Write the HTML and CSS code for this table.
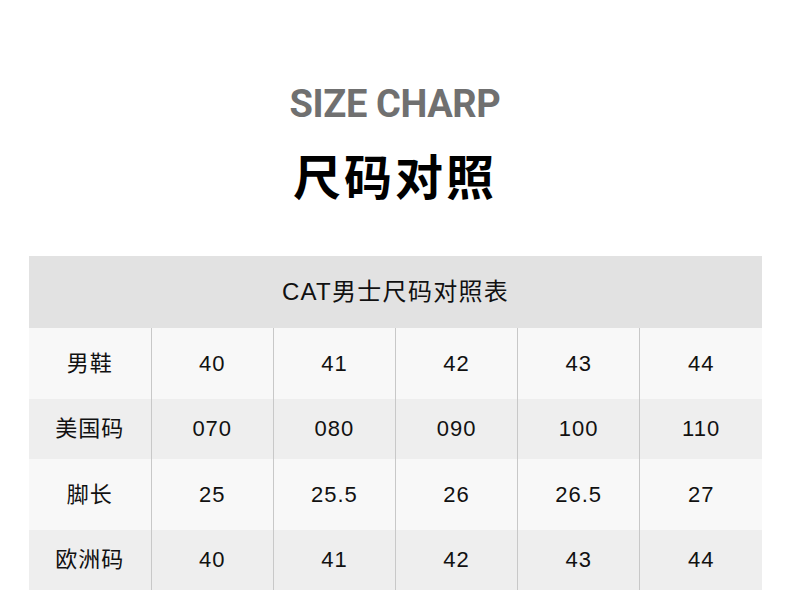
FILE: index.html
```html
<!DOCTYPE html>
<html lang="zh-CN">
<head>
<meta charset="utf-8">
<title>尺码对照</title>
<link rel="stylesheet" href="styles.css">
</head>
<body>
<div class="page">
  <header class="heading">
    <div class="en-title">SIZE CHARP</div>
    <h1 class="cn-title">尺码对照</h1>
  </header>
  <table class="size-table">
    <thead>
      <tr class="head-row"><th colspan="6">CAT男士尺码对照表</th></tr>
    </thead>
    <tbody>
      <tr class="row row-light tall"><td>男鞋</td><td>40</td><td>41</td><td>42</td><td>43</td><td>44</td></tr>
      <tr class="row row-dark short"><td>美国码</td><td>070</td><td>080</td><td>090</td><td>100</td><td>110</td></tr>
      <tr class="row row-light tall"><td>脚长</td><td>25</td><td>25.5</td><td>26</td><td>26.5</td><td>27</td></tr>
      <tr class="row row-dark short"><td>欧洲码</td><td>40</td><td>41</td><td>42</td><td>43</td><td>44</td></tr>
    </tbody>
  </table>
</div>
</body>
</html>
```

FILE: styles.css
```css
html, body {
  margin: 0;
  padding: 0;
  background: #ffffff;
}

.page {
  width: 790px;
  padding-top: 82px;
}

.heading {
  text-align: center;
}

.en-title {
  font-family: Roboto, "Liberation Sans", sans-serif;
  font-weight: 700;
  font-size: 38px;
  line-height: 44px;
  letter-spacing: -0.4px;
  color: #707070;
}

.cn-title {
  margin: 20px 0 0 0;
  font-family: "Noto Sans CJK SC", sans-serif;
  font-weight: 700;
  font-size: 48px;
  line-height: 56px;
  letter-spacing: 3px;
  color: #000000;
}

.size-table {
  width: 733px;
  margin: 54px 0 0 29px;
  border-collapse: collapse;
  table-layout: fixed;
  font-family: "Liberation Sans", "Noto Sans CJK SC", sans-serif;
  color: #111111;
}

.head-row th {
  height: 72px;
  padding: 0;
  background: #e2e2e2;
  font-weight: 400;
  font-size: 24px;
  line-height: 24px;
  letter-spacing: 1.3px;
  text-align: center;
}

.row td {
  padding: 0;
  text-align: center;
  font-size: 22px;
  line-height: 22px;
  letter-spacing: 1px;
  border-left: 1px solid #c8c8c8;
}

.row td:first-child {
  border-left: none;
}

.row-light {
  background: #f8f8f8;
}

.row-dark {
  background: #eeeeee;
}

.tall td {
  height: 71px;
}

.short td {
  height: 60px;
}
```
